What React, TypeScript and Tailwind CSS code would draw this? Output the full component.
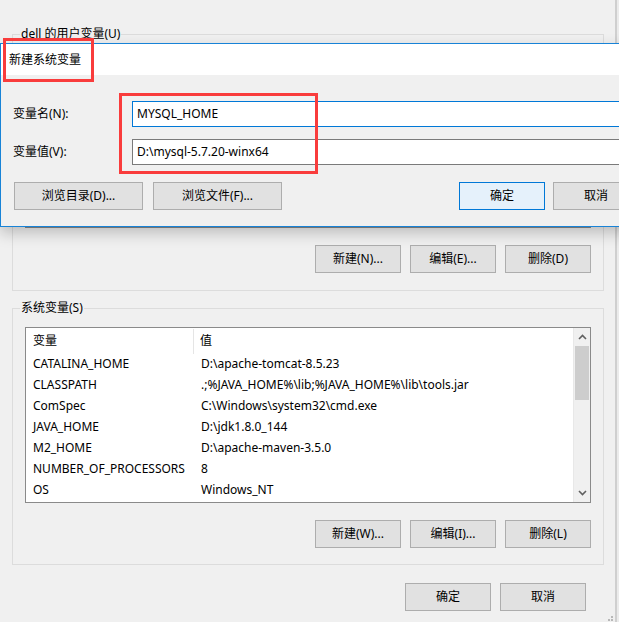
import React from "react";

const FONT = { fontFamily: '"Noto Sans", "Noto Sans CJK SC", sans-serif' };

function Btn({ children, w = "w-[86px]", primary = false }: { children: React.ReactNode; w?: string; primary?: boolean }) {
  return (
    <div
      className={
        "h-[28px] flex items-center justify-center text-[12px] text-black border " +
        w +
        (primary ? " bg-[#e5f1fb] border-[#0078d7]" : " bg-[#e1e1e1] border-[#adadad]")
      }
    >
      {children}
    </div>
  );
}

const rows: [string, string][] = [
  ["CATALINA_HOME", "D:\\apache-tomcat-8.5.23"],
  ["CLASSPATH", ".;%JAVA_HOME%\\lib;%JAVA_HOME%\\lib\\tools.jar"],
  ["ComSpec", "C:\\Windows\\system32\\cmd.exe"],
  ["JAVA_HOME", "D:\\jdk1.8.0_144"],
  ["M2_HOME", "D:\\apache-maven-3.5.0"],
  ["NUMBER_OF_PROCESSORS", "8"],
  ["OS", "Windows_NT"],
];

function ListBox({ data, header = true }: { data: [string, string][]; header?: boolean }) {
  return (
    <div className="h-[176px] border border-[#8a8a8a] bg-white flex">
      <div className="flex-1 flex flex-col">
        {header && (
          <div className="h-[25px] flex items-center text-[12px] text-black">
            <div className="w-[168px] pl-[7px] h-full flex items-center border-r border-[#e5e5e5] mt-[1px]">变量</div>
            <div className="pl-[6px]">值</div>
          </div>
        )}
        {data.map(([k, v]) => (
          <div key={k} className="h-[21px] flex items-center text-[12px] text-black whitespace-nowrap">
            <div className="w-[175px] pl-[7px]">{k}</div>
            <div>{v}</div>
          </div>
        ))}
      </div>
      <div className="w-[1px] bg-[#e8e8e8]" />
      <div className="w-[16px] bg-[#f0f0f0] flex flex-col items-center">
        <div className="h-[18px] flex items-center justify-center">
          <svg width="9" height="6" viewBox="0 0 9 6">
            <path d="M1 5 L4.5 1.5 L8 5" stroke="#606060" strokeWidth="1.6" fill="none" />
          </svg>
        </div>
        <div className="w-[14px] h-[54px] bg-[#cdcdcd]" />
        <div className="flex-1" />
        <div className="h-[18px] flex items-center justify-center">
          <svg width="9" height="6" viewBox="0 0 9 6">
            <path d="M1 1 L4.5 4.5 L8 1" stroke="#606060" strokeWidth="1.6" fill="none" />
          </svg>
        </div>
      </div>
    </div>
  );
}

export default function App() {
  return (
    <div className="relative w-[619px] h-[622px] bg-[#f0f0f0] overflow-hidden" style={FONT}>
      <div className="flex h-full">
        <div className="w-[615px] flex flex-col pl-[12px] pr-[11px] pt-[26px]">
          {/* user variables (list hidden under the dialog) */}
          <fieldset className="border border-[#dcdcdc] px-[12px] pt-[10px] pb-[17px] m-0 min-w-0">
            <legend className="text-[12px] leading-[16px] text-black px-[1px] ml-[-5px]">dell 的用户变量(U)</legend>
            <ListBox data={[]} header={false} />
            <div className="flex justify-end gap-[9px] mt-[17px]">
              <Btn>新建(N)...</Btn>
              <Btn>编辑(E)...</Btn>
              <Btn>删除(D)</Btn>
            </div>
          </fieldset>
          {/* system variables */}
          <fieldset className="border border-[#dcdcdc] px-[12px] pt-[11px] pb-[16px] mt-[9px] m-0 min-w-0">
            <legend className="text-[12px] leading-[16px] text-black px-[1px] ml-[-5px]">系统变量(S)</legend>
            <ListBox data={rows} />
            <div className="flex justify-end gap-[9px] mt-[17px]">
              <Btn>新建(W)...</Btn>
              <Btn>编辑(I)...</Btn>
              <Btn>删除(L)</Btn>
            </div>
          </fieldset>
          <div className="flex justify-end gap-[9px] mt-[18px] pr-[18px]">
            <Btn>确定</Btn>
            <Btn>取消</Btn>
          </div>
        </div>
        <div className="w-[2px] bg-[#cfcfcf]" />
        <div className="flex-1 bg-[#ebebeb]" />
      </div>

      {/* dialog */}
      <div className="absolute left-0 top-[43px] w-[652px] h-[184px] border border-[#1883d7] bg-[#f0f0f0] flex flex-col shadow-[0_6px_14px_rgba(0,0,0,0.22)]">
        <div className="h-[31px] bg-white flex items-center pl-[8px] text-[12px] text-black shrink-0">新建系统变量</div>
        <div className="flex flex-col px-[12px]">
          <div className="flex items-center mt-[26px] h-[26px]">
            <div className="w-[119px] text-[12px] text-black">变量名(N):</div>
            <div className="flex-1 h-[26px] bg-white border border-[#0078d7] flex items-center pl-[4px] text-[12px] text-black">MYSQL_HOME</div>
          </div>
          <div className="flex items-center mt-[12px] h-[26px]">
            <div className="w-[119px] text-[12px] text-black">变量值(V):</div>
            <div className="flex-1 h-[26px] bg-white border border-[#7a7a7a] flex items-center pl-[4px] text-[12px] text-black">D:\mysql-5.7.20-winx64</div>
          </div>
          <div className="flex items-center mt-[17px] pl-[1px]">
            <div className="flex gap-[10px]">
              <Btn w="w-[129px]">浏览目录(D)...</Btn>
              <Btn w="w-[129px]">浏览文件(F)...</Btn>
            </div>
            <div className="flex-1" />
            <div className="flex gap-[8px]">
              <Btn primary>确定</Btn>
              <Btn>取消</Btn>
            </div>
          </div>
        </div>
      </div>

      {/* red annotation boxes */}
      <div className="absolute left-[3px] top-[38px] w-[91px] h-[44px] border-[3px] border-[#f93c3c]" />
      <div className="absolute left-[119px] top-[93px] w-[199px] h-[81px] border-[3px] border-[#f93c3c]" />

      {/* resize grip */}
      <svg className="absolute left-[606px] top-[614px]" width="10" height="8" viewBox="0 0 10 8">
        <rect x="5" y="2" width="2" height="2" fill="#b8b8b8" />
        <rect x="2" y="5" width="2" height="2" fill="#b8b8b8" />
        <rect x="5" y="5" width="2" height="2" fill="#b8b8b8" />
      </svg>
    </div>
  );
}
